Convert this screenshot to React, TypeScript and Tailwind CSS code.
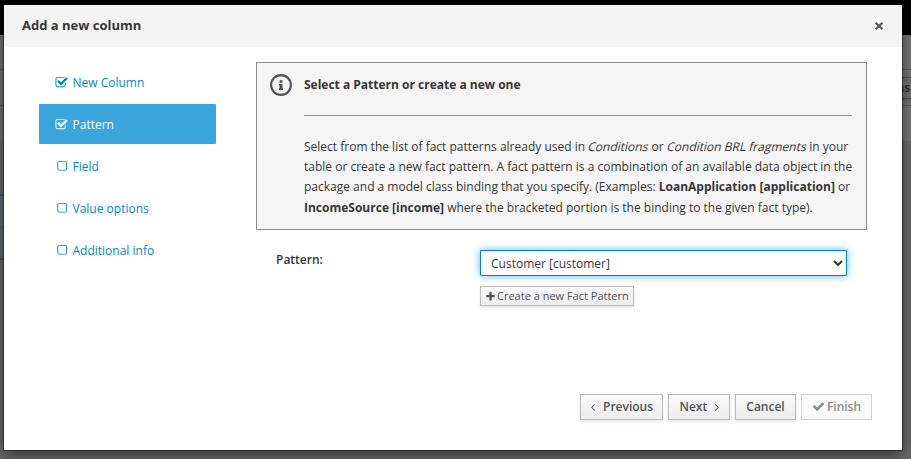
import React from "react";

const checkedPath =
  "M1472 930v318q0 119-84.5 203.5t-203.5 84.5h-832q-119 0-203.5-84.5t-84.5-203.5v-832q0-119 84.5-203.5t203.5-84.5h832q63 0 117 25 15 7 18 23 3 17-9 29l-49 49q-10 10-23 10-3 0-9-2-23-6-45-6h-832q-66 0-113 47t-47 113v832q0 66 47 113t113 47h832q66 0 113-47t47-113v-254q0-13 9-22l64-64q10-10 23-10 6 0 12 3 20 8 20 29zm231-489l-814 814q-24 24-57 24t-57-24l-430-430q-24-24-24-57t24-57l110-110q24-24 57-24t57 24l263 263 647-647q24-24 57-24t57 24l110 110q24 24 24 57t-24 57z";
const uncheckedPath =
  "M1312 256h-832q-66 0-113 47t-47 113v832q0 66 47 113t113 47h832q66 0 113-47t47-113v-832q0-66-47-113t-113-47zm288 160v832q0 119-84.5 203.5t-203.5 84.5h-832q-119 0-203.5-84.5t-84.5-203.5v-832q0-119 84.5-203.5t203.5-84.5h832q119 0 203.5 84.5t84.5 203.5z";
const plusPath =
  "M1600 736v192q0 40-28 68t-68 28h-416v416q0 40-28 68t-68 28h-192q-40 0-68-28t-28-68v-416h-416q-40 0-68-28t-28-68v-192q0-40 28-68t68-28h416v-416q0-40 28-68t68-28h192q40 0 68 28t28 68v416h416q40 0 68 28t28 68z";
const checkPath =
  "M1671 566q0 40-28 68l-724 724-136 136q-28 28-68 28t-68-28l-136-136-362-362q-28-28-28-68t28-68l136-136q28-28 68-28t68 28l294 295 656-657q28-28 68-28t68 28l136 136q28 28 28 68z";
const leftPath =
  "M1203 544q0 13-10 23l-393 393 393 393q10 10 10 23t-10 23l-50 50q-10 10-23 10t-23-10l-466-466q-10-10-10-23t10-23l466-466q10-10 23-10t23 10l50 50q10 10 10 23z";
const rightPath =
  "M1171 960q0 13-10 23l-466 466q-10 10-23 10t-23-10l-50-50q-10-10-10-23t10-23l393-393-393-393q-10-10-10-23t10-23l50-50q10-10 23-10t23 10l466 466q10 10 10 23z";

function Glyph({ d, className }: { d: string; className: string }) {
  return (
    <svg viewBox="0 0 1792 1792" fill="currentColor" className={`shrink-0 ${className}`}>
      <path d={d} />
    </svg>
  );
}

// Slanted regular face, used for emphasis inside the help text.
function Slanted({ children }: { children: string }) {
  return <span className="inline-block origin-[0_11px] [transform:skewX(-14deg)]">{children}</span>;
}

const steps = [
  { label: "New Column", done: true, active: false },
  { label: "Pattern", done: true, active: true },
  { label: "Field", done: false, active: false },
  { label: "Value options", done: false, active: false },
  { label: "Additional info", done: false, active: false },
];

const button =
  "flex h-[26px] items-center border border-[#bbb] bg-linear-to-b from-[#fafafa] to-[#ededed] text-[12px] font-semibold text-[#4d5258] shadow-[0_2px_3px_rgba(3,3,3,0.1)]";

function Backdrop() {
  return (
    <div className="flex h-full flex-col bg-[#6b6b6b]">
      <div className="h-[35px] bg-black" />
      <div className="flex flex-1 justify-between">
        <div className="flex w-[10px] flex-col">
          <div className="h-[35px] border-b border-[#565656] bg-[#757372]" />
          <div className="h-[36px] border-b border-[#565656] bg-[#757372]" />
          <div className="h-[35px] bg-[#757372]" />
          <div className="h-[53px] bg-[#6b6967]" />
          <div className="h-[34px] border-t-2 border-b border-t-[#2d5873] border-b-[#565656] bg-[#626b72]" />
          <div className="h-[32px] border-b-2 border-[#2d5873] bg-[#626b72]" />
        </div>
        <div className="flex w-[20px] flex-col">
          <div className="h-[35px] border-b border-[#5a5a5a] bg-[#787878]" />
          <div className="flex h-[36px] items-center border-b border-[#5a5a5a] bg-[#787878]">
            <div className="flex h-[22px] w-full items-center justify-end overflow-hidden border-y border-[#505050] bg-[#737373] pr-px text-[12px] font-semibold text-[#26292c] shadow-[0_2px_3px_rgba(0,0,0,0.15)]">
              ns
            </div>
          </div>
          <div className="h-[35px] bg-[#787878]" />
        </div>
      </div>
    </div>
  );
}

export default function App() {
  return (
    <div className="relative h-[459px] w-[911px] overflow-hidden font-['Open_Sans',sans-serif] text-[12px] leading-[20px] text-[#363636]">
      <Backdrop />
      <div
        role="dialog"
        className="absolute top-[4px] left-[3px] flex h-[447px] w-[900px] flex-col border border-black/40 bg-white bg-clip-padding shadow-[0_5px_15px_rgba(0,0,0,0.5)]"
      >
        <div className="flex h-[42px] items-center justify-between bg-[#f4f4f4] pr-[18px] pl-[18px]">
          <h4 className="pb-[2px] text-[13px] font-bold">Add a new column</h4>
          <svg viewBox="0 0 10 10" className="h-[10px] w-[10px]">
            <path d="M1.5 1.7 L8.5 8.3 M8.5 1.7 L1.5 8.3" stroke="#5a5a5a" strokeWidth="2.2" />
          </svg>
        </div>

        <div className="flex flex-1">
          <ul className="flex w-[252px] flex-col gap-[2px] pt-[15px] pl-[35px]">
            {steps.map((s) => (
              <li
                key={s.label}
                className={
                  s.active
                    ? "flex h-[40px] w-[177px] items-center rounded-[1px] bg-[#39a5dc] pt-[2px] pl-[16px] text-white"
                    : "flex h-[40px] w-[177px] items-center pt-[2px] pl-[16px] text-[#0088ce]"
                }
              >
                <span className="flex w-[17.5px] items-center pb-px">
                  {s.done ? (
                    <Glyph d={checkedPath} className="h-[13px] w-[13px]" />
                  ) : (
                    <Glyph d={uncheckedPath} className="ml-[0.7px] h-[12.4px] w-[12.4px]" />
                  )}
                </span>
                <span>{s.label}</span>
              </li>
            ))}
          </ul>

          <div className="flex flex-col pt-[15px]">
            <div className="flex h-[168px] w-[611px] border border-[#8b8d8f] bg-[#f5f5f5] pr-[14px] pl-[13px]">
              <svg viewBox="0 0 22 22" className="mt-[10.5px] h-[22px] w-[22px] shrink-0">
                <circle cx="11" cy="11" r="9.9" fill="none" stroke="#4d5258" strokeWidth="2.1" />
                <path
                  d="M9.6 6.2h2.9v2.5h-2.9z M9 9.9h3.5v4.3h.6v1.7h-4.1v-1.7h.6v-2.7h-.6z"
                  fill="#4d5258"
                />
              </svg>
              <div className="ml-[12px] flex-1">
                <div className="h-[53px] border-b border-[#8b8d8f] pt-[12px] font-bold">
                  Select a Pattern or create a new one
                </div>
                <p className="mt-[20.75px] leading-[20.35px] whitespace-nowrap">
                  Select from the list of fact patterns already used in <Slanted>Conditions</Slanted> or{" "}
                  <Slanted>Condition BRL fragments</Slanted> in your
                  <br />
                  table or create a new fact pattern. A fact pattern is a combination of an available data object in the
                  <br />
                  package and a model class binding that you specify. (Examples: <b>LoanApplication [application]</b> or
                  <br />
                  <b>IncomeSource [income]</b> where the bracketed portion is the binding to the given fact type).
                </p>
              </div>
            </div>

            <div className="mt-[20px] flex pl-[20px]">
              <label className="w-[204px] font-semibold">Pattern:</label>
              <div className="flex flex-col items-start">
                <select className="h-[26px] w-[367px] rounded-[1px] border border-[#0088ce] bg-white px-[6px] text-[12px] text-[#363636] shadow-[inset_0_1px_1px_rgba(3,3,3,0.075),0_0_8px_rgba(0,136,206,0.6)] outline-none">
                  <option>Customer [customer]</option>
                </select>
                <button className="mt-[10px] flex h-[20px] w-[154px] items-center border border-[#bbb] bg-linear-to-b from-[#fafafa] to-[#ededed] pl-[4px] text-[11px] text-[#4d5258] shadow-[0_2px_3px_rgba(3,3,3,0.1)]">
                  <Glyph d={plusPath} className="h-[11px] w-[11px]" />
                  <span className="ml-[1px] whitespace-nowrap">Create a new Fact Pattern</span>
                </button>
              </div>
            </div>
          </div>
        </div>

        <div className="flex h-[56px] justify-end gap-[5px] pr-[30px]">
          <button className={`${button} w-[83px] pl-[6px]`}>
            <Glyph d={leftPath} className="h-[12px] w-[12px]" />
            <span className="ml-[4px]">Previous</span>
          </button>
          <button className={`${button} w-[62px] pl-[10.5px]`}>
            <span>Next</span>
            <Glyph d={rightPath} className="ml-[3.5px] h-[12px] w-[12px]" />
          </button>
          <button className={`${button} w-[61px] justify-center`}>Cancel</button>
          <button
            disabled
            className="flex h-[26px] w-[71px] items-center justify-center border border-[#d1d1d1] bg-[#fafafa] text-[12px] font-semibold text-[#8b8d8f]"
          >
            <Glyph d={checkPath} className="mr-[2px] mb-px h-[13px] w-[13px]" />
            Finish
          </button>
        </div>
      </div>
    </div>
  );
}
